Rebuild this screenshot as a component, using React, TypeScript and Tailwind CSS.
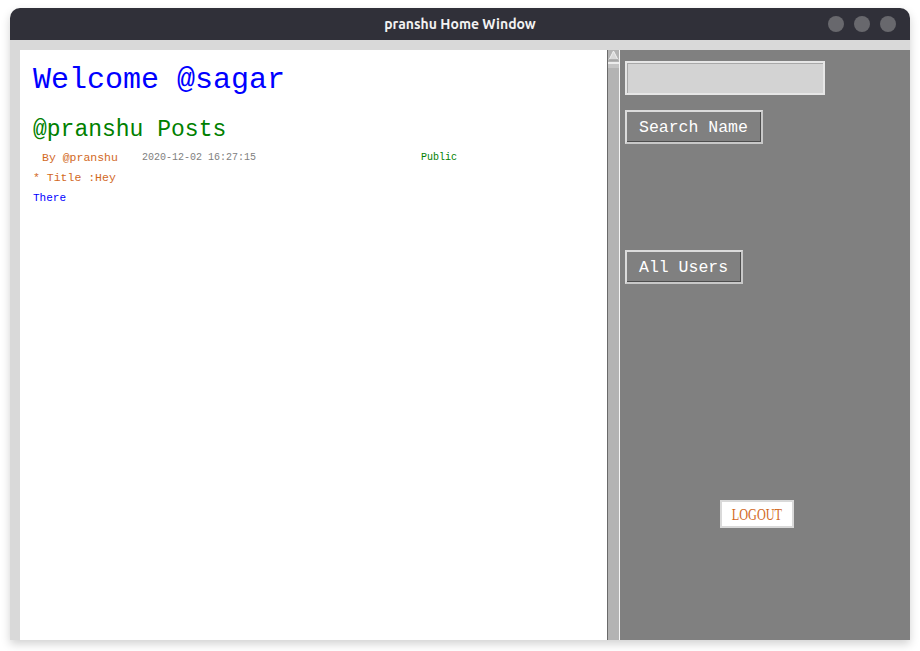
import React from 'react';

const mono = { fontFamily: '"Liberation Mono", "DejaVu Sans Mono", monospace' };

function TkButton({ label, className }: { label: string; className: string }) {
  return (
    <div
      className={`flex items-center border-2 border-t-[#dcdcdc] border-l-[#dcdcdc] border-r-[#c8c8c8] border-b-[#c8c8c8] bg-[#808080] ${className}`}
    >
      <div className="flex h-full w-full items-center border-b border-r border-[#4d4d4d] pl-[12px] pt-[3px] text-[16.5px] text-white" style={mono}>
        {label}
      </div>
    </div>
  );
}

export default function App() {
  return (
    <div className="min-h-[651px] w-full bg-white pt-2">
      <div className="mx-[10px] flex h-[632px] flex-col overflow-hidden rounded-t-[10px] shadow-[0_4px_10px_rgba(0,0,0,0.18)]">
        {/* title bar */}
        <div className="relative flex h-[32px] flex-none items-center justify-center bg-[#303039]">
          <span className="text-[14px] font-bold text-[#f2f2f2]" style={{ fontFamily: 'Ubuntu, "Open Sans", "Noto Sans", sans-serif' }}>
            pranshu Home Window
          </span>
          <div className="absolute right-[14px] top-[8px] flex gap-[10px]">
            <span className="h-4 w-4 rounded-full bg-[#68686d]" />
            <span className="h-4 w-4 rounded-full bg-[#68686d]" />
            <span className="h-4 w-4 rounded-full bg-[#68686d]" />
          </div>
        </div>

        {/* frame */}
        <div className="flex flex-1 flex-col bg-[#d9d9d9] pt-[10px] pl-[10px]">
          <div className="flex flex-1">
            {/* posts panel */}
            <div className="w-[587px] bg-white pl-[13px]" style={mono}>
              <div className="mt-[15px] h-[30px] text-[30px] leading-[30px] text-[#0000ff]">Welcome @sagar</div>
              <div className="mt-[21px] h-[28px] text-[23px] leading-[28px] text-[#008000]">@pranshu Posts</div>
              <div className="mt-[6px] flex h-[16px] items-center leading-[16px]">
                <span className="w-[109px] pl-[9px] text-[11.5px] text-[#d2691e]">By @pranshu</span>
                <span className="w-[279px] text-[10px] text-[#808080]">2020-12-02 16:27:15</span>
                <span className="text-[10px] text-[#008000]">Public</span>
              </div>
              <div className="mt-[4px] h-[16px] text-[11.5px] leading-[16px] text-[#d2691e]">* Title :Hey</div>
              <div className="mt-[4px] h-[16px] text-[11px] leading-[16px] text-[#0000ff]">There</div>
            </div>

            {/* scrollbar */}
            <div className="flex w-[12px] flex-col border-l border-[#6a6a6a] bg-[#b3b3b3]">
              <svg width="11" height="11" viewBox="0 0 11 11" className="flex-none">
                <polygon points="5.5,1 10,10 1,10" fill="#d9d9d9" stroke="#f0f0f0" strokeWidth="1" />
                <line x1="1" y1="10" x2="10" y2="10" stroke="#7a7a7a" />
              </svg>
              <div className="mt-[1px] h-[6px] border-t-2 border-[#ececec] bg-[#c4c4c4]" />
            </div>
            <div className="w-[1px] bg-[#f4f4f4]" />

            {/* side panel */}
            <div className="flex flex-1 flex-col bg-[#808080] pl-[5px]">
              <div className="mt-[11px] h-[34px] w-[200px] border-2 border-[#e6e6e6]">
                <div className="h-full w-full border-l border-t border-[#a8a8a8] bg-[#d3d3d3]" />
              </div>
              <TkButton label="Search Name" className="mt-[15px] h-[34px] w-[138px]" />
              <TkButton label="All Users" className="mt-[106px] h-[34px] w-[118px]" />
              <div className="mt-[216px] ml-[95px] flex h-[28px] w-[74px] items-center justify-center border-2 border-[#d9d9d9] bg-white">
                <span
                  className="inline-block origin-center scale-x-[0.72] text-[17px] leading-none text-[#d2691e]"
                  style={{ fontFamily: '"Liberation Serif", "DejaVu Serif", serif' }}
                >
                  LOGOUT
                </span>
              </div>
            </div>
          </div>
        </div>
      </div>
    </div>
  );
}
